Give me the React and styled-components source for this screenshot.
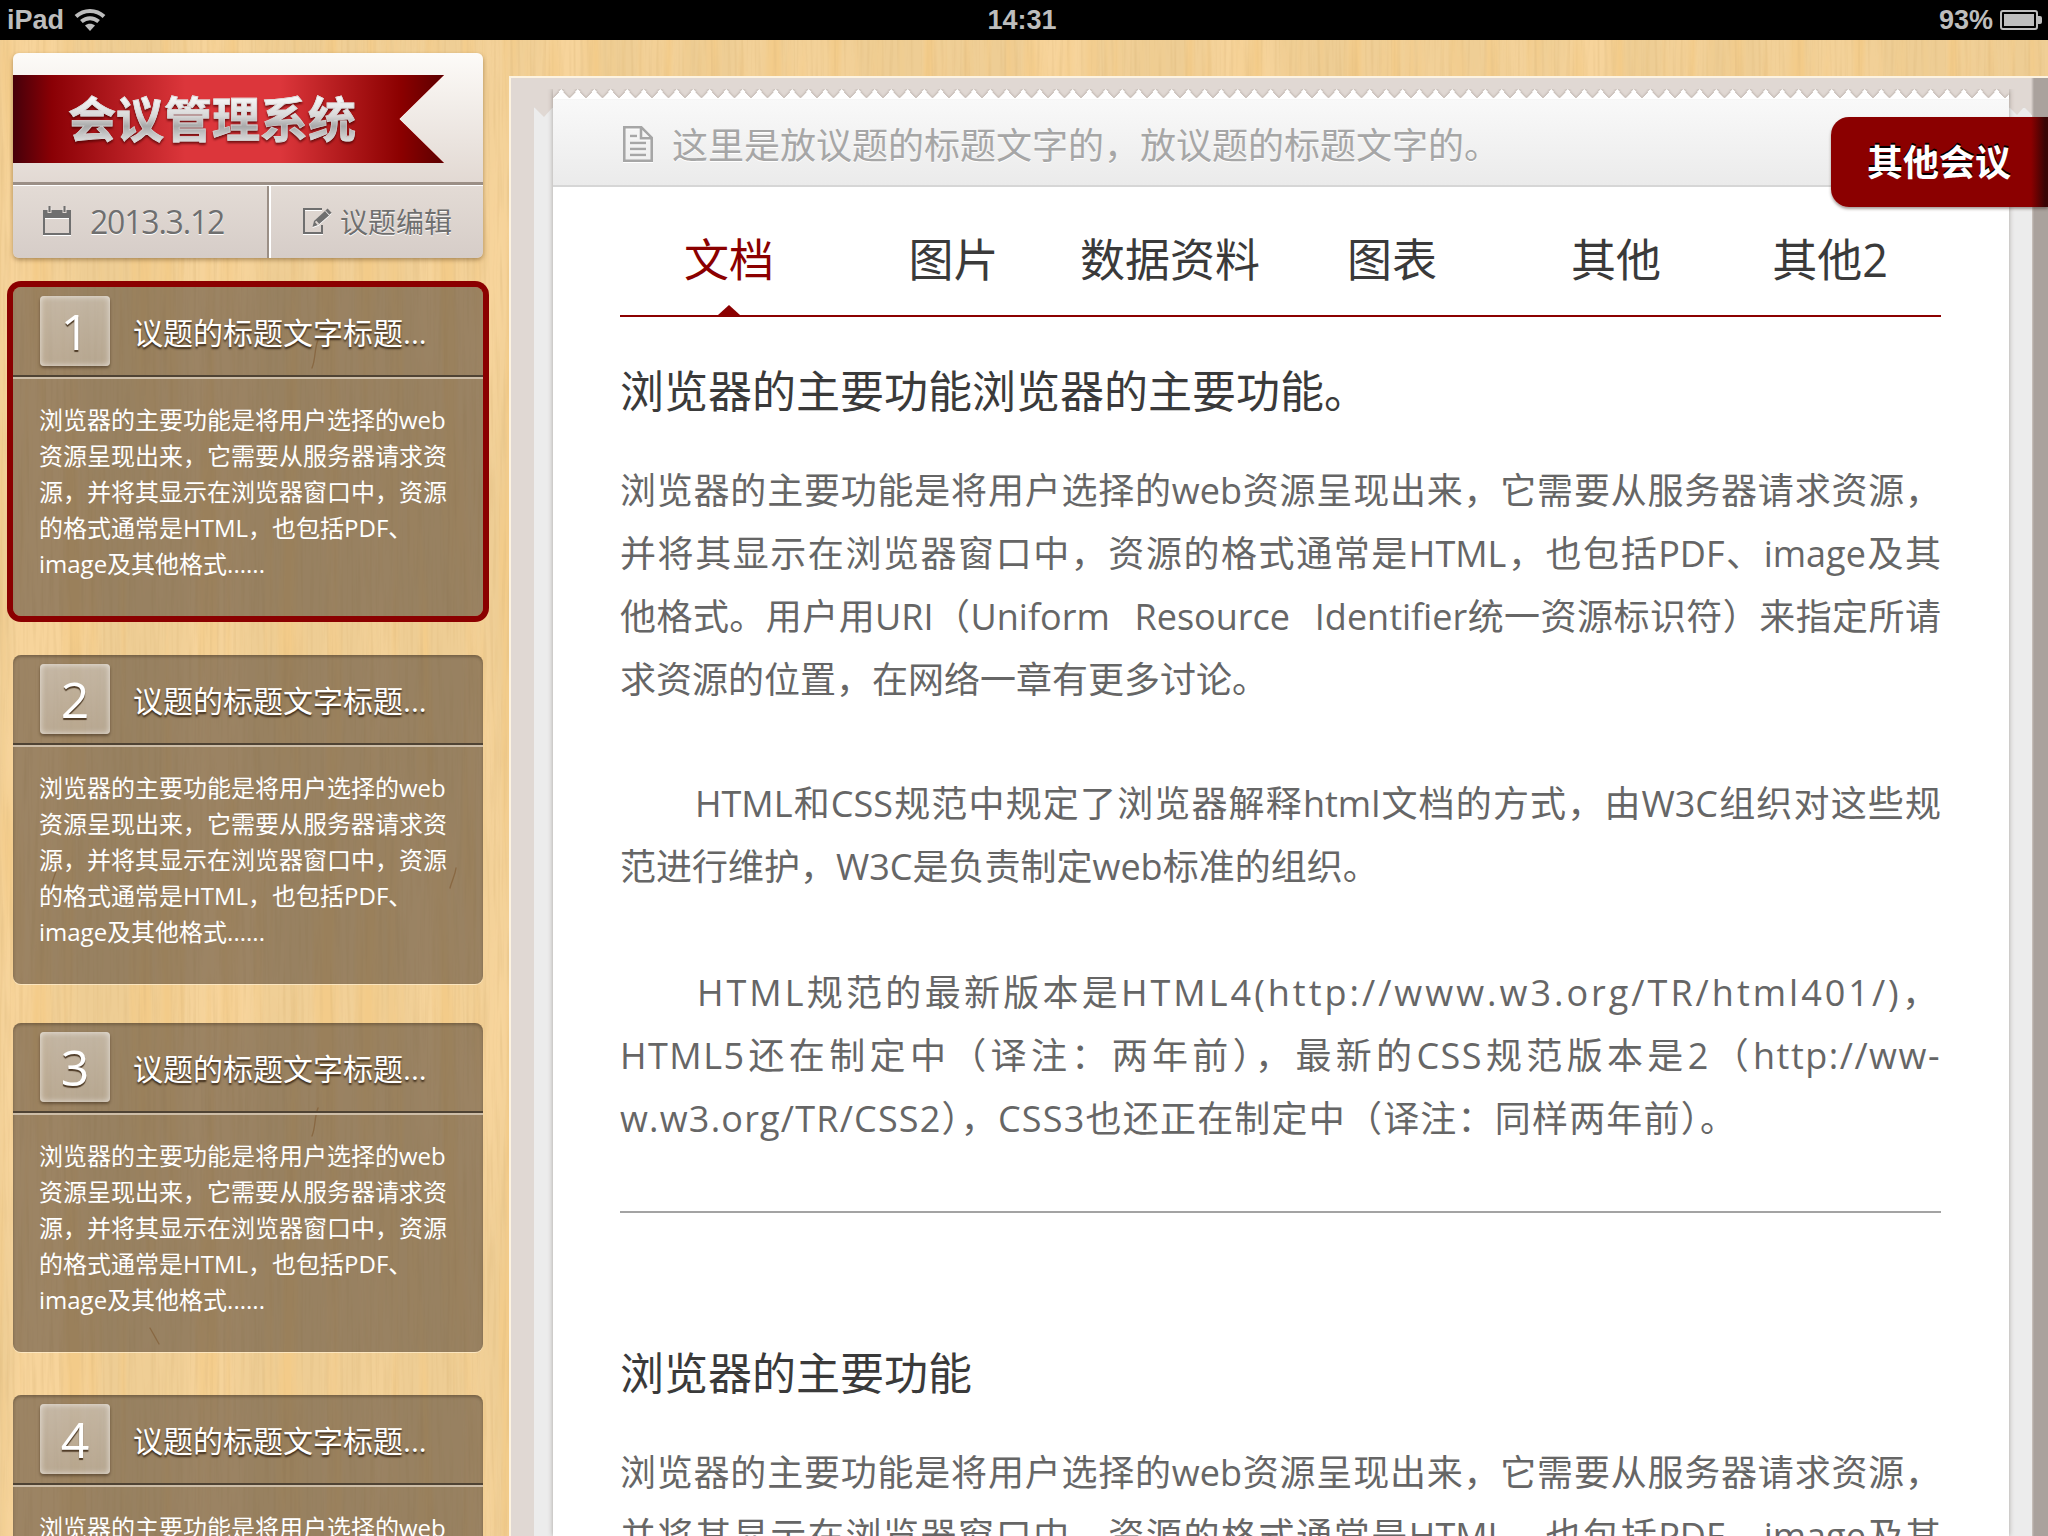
import React from 'react'
import styled, { createGlobalStyle } from 'styled-components'

const woodSvg = `<svg xmlns='http://www.w3.org/2000/svg' width='1024' height='768'>
<filter id='b' x='0' y='0' width='100%' height='100%'><feTurbulence type='fractalNoise' baseFrequency='0.012 0.0012' numOctaves='3' seed='11' stitchTiles='stitch'/><feColorMatrix values='0 0 0 0 0.93  0 0 0 0 0.66  0 0 0 0 0.33  3.6 0 0 0 -1.5'/></filter>
<filter id='g' x='0' y='0' width='100%' height='100%'><feTurbulence type='fractalNoise' baseFrequency='0.05 0.002' numOctaves='3' seed='7' stitchTiles='stitch'/><feColorMatrix values='0 0 0 0 0.9  0 0 0 0 0.6  0 0 0 0 0.25  3.6 0 0 0 -1.7'/></filter>
<filter id='f' x='0' y='0' width='100%' height='100%'><feTurbulence type='fractalNoise' baseFrequency='0.3 0.012' numOctaves='2' seed='3' stitchTiles='stitch'/><feColorMatrix values='0 0 0 0 0.72  0 0 0 0 0.48  0 0 0 0 0.2  1 0 0 0 -0.46'/></filter>
<rect width='1024' height='768' fill='#eecd94'/><rect width='1024' height='768' filter='url(#b)'/><rect width='1024' height='768' filter='url(#g)'/><rect width='1024' height='768' filter='url(#f)'/>
<g fill='none' stroke='#b9782c' stroke-width='1.4' stroke-linecap='round' opacity='0.6'>
<path d='M57 60c-2 8-5 12-6 20'/><path d='M456 60c-1 8-4 12-6 20'/><path d='M616 40l7 18'/><path d='M765 60c0 6-1 8-2 14'/><path d='M318 300c-4 10-2 18-6 28'/><path d='M840 420c-3 8-6 14-5 24'/><path d='M150 520l9 16'/><path d='M560 620c-2 8-4 12-5 22'/>
</g></svg>`
const wood = `url("data:image/svg+xml,${encodeURIComponent(woodSvg)}")`

const Global = createGlobalStyle`
  html, body { margin: 0; padding: 0; background: #000; }
  body { width: 2048px; height: 1536px; overflow: hidden; font-family: "Open Sans", "Noto Sans CJK SC", sans-serif; }
`

const Screen = styled.div`
  width: 2048px;
  height: 1536px;
  display: flex;
  flex-direction: column;
  overflow: hidden;
`

const StatusBar = styled.div`
  height: 40px;
  flex-shrink: 0;
  background: #000;
  color: #bdbdbd;
  display: grid;
  grid-template-columns: 1fr auto 1fr;
  align-items: center;
  padding: 0 6px 0 7px;
  font-family: "Liberation Sans", sans-serif;
  font-size: 27px;
  font-weight: 700;
`
const StatusLeft = styled.div`
  display: flex;
  align-items: center;
  gap: 10px;
`
const StatusTime = styled.div`
  margin-right: 5px;
`
const StatusRight = styled.div`
  display: flex;
  align-items: center;
  justify-content: flex-end;
  gap: 7px;
`
const Desk = styled.div`
  flex: 1;
  display: flex;
  background: ${wood};
  min-height: 0;
`

const Sidebar = styled.aside`
  width: 509px;
  flex-shrink: 0;
  padding: 13px 26px 0 13px;
  box-sizing: border-box;
`
const BrandCard = styled.div`
  border-radius: 6px;
  overflow: hidden;
  box-shadow: 0 2px 4px rgba(90, 60, 20, 0.45);
`
const BrandTop = styled.div`
  height: 132px;
  padding-top: 22px;
  box-sizing: border-box;
  background: linear-gradient(#fdfbf8, #e2d9d3);
  border-bottom: 3px solid #9b8f86;
`
const Ribbon = styled.div`
  width: 431px;
  height: 88px;
  display: flex;
  align-items: center;
  padding-left: 55px;
  box-sizing: border-box;
  clip-path: polygon(0 0, 100% 0, 89.6% 50%, 100% 100%, 0 100%);
  background:
    linear-gradient(90deg, #45000a 0, #8a0005 9%, rgba(139, 0, 0, 0) 40%, rgba(139, 0, 0, 0) 62%, #8b0000 90%, #5c0000 100%),
    #dc363b;
`
const RibbonTitle = styled.h1`
  margin: 0;
  font-size: 48px;
  line-height: 60px;
  font-weight: 700;
  color: transparent;
  background: linear-gradient(#f6f6f6 15%, #d8d8d8 45%, #a8a8a8 62%, #e0e0e0 88%);
  -webkit-background-clip: text;
  background-clip: text;
  -webkit-text-stroke: 0.8px rgba(215, 215, 215, 0.75);
  filter: drop-shadow(0 2px 1px rgba(70, 0, 0, 0.7));
`
const BrandRow = styled.div`
  height: 73px;
  box-sizing: border-box;
  display: flex;
  color: #6f6f6f;
  background: linear-gradient(#e3dbd5, #d6cdc8);
  border-top: 1px solid #fff;
  text-shadow: 0 1px 0 #fff;
`
const DateCell = styled.div`
  width: 256px;
  display: flex;
  align-items: center;
  gap: 19px;
  padding: 0 0 2px 30px;
  box-sizing: border-box;
  font-size: 32px;
  letter-spacing: -1.2px;
  border-right: 2px solid #9b8f86;
`
const EditCell = styled.div`
  flex: 1;
  display: flex;
  align-items: center;
  gap: 8px;
  padding: 0 0 2px 32px;
  font-size: 28px;
  border-left: 2px solid #fff;
`

const AgendaList = styled.div`
  display: flex;
  flex-direction: column;
  margin-top: 29px;
`
const Agenda = styled.section`
  height: 329px;
  flex-shrink: 0;
  margin-bottom: ${p => p.$gap}px;
  border-radius: 8px;
  background: rgba(72, 60, 50, 0.52);
  color: #fff;
  box-shadow: ${p => p.$active
    ? '0 0 0 6px #8b0000'
    : 'inset 0 2px 3px rgba(40, 25, 10, 0.3), 0 1px 0 rgba(255, 240, 210, 0.7)'};
`
const AgendaHead = styled.div`
  height: 88px;
  display: flex;
  align-items: center;
  gap: 23px;
  padding-left: 27px;
  border-bottom: 2px solid #4f4334;
  box-shadow: 0 2px 0 #cdbda7;
`
const Badge = styled.div`
  width: 70px;
  height: 70px;
  flex-shrink: 0;
  display: flex;
  align-items: center;
  justify-content: center;
  border-radius: 4px;
  font-size: 50px;
  font-family: "Open Sans", sans-serif;
  font-weight: 400;
  background: linear-gradient(rgba(255, 255, 255, 0.42), rgba(255, 255, 255, 0.3));
  box-shadow: inset 0 0 6px rgba(255, 255, 255, 0.7), 0 2px 3px rgba(40, 25, 10, 0.45);
  text-shadow: 0 2px 1px rgba(50, 30, 10, 0.8);
`
const AgendaTitle = styled.div`
  font-size: 30px;
  line-height: 40px;
  padding-top: 4px;
  text-shadow: 0 2px 2px rgba(40, 25, 10, 0.85);
`
const AgendaText = styled.p`
  margin: 0;
  padding: 25px 0 0 26px;
  font-size: 24px;
  line-height: 36px;
  color: #fff;
  white-space: nowrap;
`

const Main = styled.main`
  position: relative;
  flex: 1;
  margin-top: 36px;
  padding: 11px 39px 0 42px;
  display: flex;
  background: linear-gradient(90deg, #e0d8d3 1520px, #aaa29d 1523px);
  border-top: 2px solid #fdf3e0;
  border-left: 2px solid #fdf3e0;
  box-sizing: border-box;
  min-width: 0;
  &::before {
    content: '';
    position: absolute;
    top: 29px;
    left: 23px;
    right: 16px;
    bottom: 0;
    background: #ececec;
    box-shadow: 0 0 4px rgba(60, 50, 40, 0.35);
    clip-path: polygon(0 0, 10px 10px, 19px 0, 19px 100%, 1475px 100%, 1475px 0, 1483px 8px, 1490px 0, 1498px 8px, 1498px 100%, 0 100%);
  }
`
const Page = styled.div`
  position: relative;
  width: 1456px;
  flex-shrink: 0;
  box-shadow: 0 0 5px rgba(60, 50, 40, 0.4);
  clip-path: inset(0 -8px 0 -8px);
`
const Teeth = styled.div`
  height: 10px;
  background: conic-gradient(from 140.5deg at 50% 0, #fff 79deg, transparent 0) 0 0 / 16.5px 10px repeat-x;
  filter: drop-shadow(0 -1px 1px rgba(70, 50, 40, 0.25));
`
const Sheet = styled.div`
  background: #fff;
  height: 1437px;
`
const PageHeader = styled.header`
  height: 88px;
  display: flex;
  align-items: center;
  gap: 19px;
  padding: 3px 0 0 70px;
  background: linear-gradient(#f9f9f9, #ebebeb);
  border-bottom: 2px solid #d6d6d6;
  box-sizing: border-box;
  color: #a6a6a6;
  font-size: 36px;
  text-shadow: 0 1px 0 #fff;
`
const Content = styled.div`
  padding: 0 68px 0 67px;
`
const TabBar = styled.nav`
  display: grid;
  grid-template-columns: 218px 231px 202px 242px 206px 1fr;
  padding: 45px 0 27px;
  border-bottom: 2px solid #8b0000;
`
const Tab = styled.div`
  position: relative;
  text-align: center;
  font-size: 45px;
  line-height: 56px;
  color: ${p => (p.$active ? '#8b0000' : '#3a3a3a')};
  ${p => p.$active && `
    &::after {
      content: '';
      position: absolute;
      left: 50%;
      bottom: -27px;
      margin-left: -11px;
      border: solid transparent;
      border-width: 0 11px 10px;
      border-bottom-color: #8b0000;
    }
  `}
`
const Heading = styled.h2`
  margin: ${p => p.$top}px 0 38px;
  font-size: 44px;
  line-height: 60px;
  font-weight: 400;
  color: #3a3a3a;
`
const Para = styled.p`
  margin: ${p => p.$top || 0}px 0 0;
  font-size: 36px;
  line-height: 63px;
  color: #666;
`
const Line = styled.span`
  display: block;
  text-align: ${p => (p.$last ? 'left' : 'justify')};
  text-align-last: ${p => (p.$last ? 'left' : 'justify')};
  text-indent: ${p => p.$indent || 0}px;
  letter-spacing: ${p => p.$spacing || 0}px;
  word-spacing: ${p => p.$words || 0}px;
`
const Rule = styled.hr`
  margin: 61px 0 0;
  border: 0;
  border-top: 2px solid #a3a3a3;
`
const OtherButton = styled.button`
  position: absolute;
  top: 39px;
  right: 0;
  width: 217px;
  height: 90px;
  padding: 0 0 3px 36px;
  border: 0;
  border-radius: 18px 0 0 18px;
  text-align: left;
  font-family: inherit;
  font-size: 36px;
  font-weight: 700;
  color: #fff;
  text-shadow: 0 -2px 0 #000;
  background: linear-gradient(90deg, #8b0000 200px, #380404 214px);
  box-shadow: 0 2px 3px rgba(60, 40, 30, 0.45);
`

const WifiIcon = () => (
  <svg width="32" height="24" viewBox="0 0 32 24" fill="none" stroke="#bdbdbd" strokeWidth="4">
    <path d="M2 8.500C10 1 22 1 30 8.500" />
    <path d="M7.400 13.600C12.600 9 19.400 9 24.600 13.600" />
    <path d="M16 23l-5-5.400c2.900-2.400 7.100-2.400 10 0z" fill="#bdbdbd" stroke="none" />
  </svg>
)
const BatteryIcon = () => (
  <svg width="42" height="21" viewBox="0 0 42 21">
    <rect x="1" y="1" width="36" height="18" rx="2" fill="none" stroke="#bdbdbd" strokeWidth="2" />
    <rect x="4" y="4" width="30" height="12" fill="#bdbdbd" />
    <path d="M38 6h2a2 2 0 0 1 2 2v4a2 2 0 0 1-2 2h-2z" fill="#bdbdbd" />
  </svg>
)
const CalendarIcon = () => (
  <svg width="28" height="30" viewBox="0 0 28 30" fill="none" stroke="#6f6f6f" style={{ filter: 'drop-shadow(0 1px 0 #fff)' }}>
    <path d="M1 5h26v23H1zM1 11h26" strokeWidth="2" />
    <path d="M1 5h26v5H1z" fill="#6f6f6f" strokeWidth="0" />
    <path d="M6.500 1v6M21.500 1v6" stroke="#e0d8d3" strokeWidth="4" />
    <path d="M6.500 0v6M21.500 0v6" strokeWidth="2" />
  </svg>
)
const EditIcon = () => (
  <svg width="29" height="26" viewBox="0 0 29 26" fill="none" stroke="#6f6f6f" strokeWidth="2" style={{ filter: 'drop-shadow(0 1px 0 #fff)' }}>
    <path d="M19 1H1v24h18v-8" />
    <path d="M9.500 19l1.500-6L22 3l4 4.400L15 17z" fill="#6f6f6f" stroke="none" />
    <path d="M23.500 1.500l4 4.300" strokeWidth="3" />
    <path d="M12.600 13.400l3 3.200" stroke="#e0d8d3" />
  </svg>
)
const DocIcon = () => (
  <svg width="30" height="36" viewBox="0 0 30 36" fill="none" stroke="#a6a6a6" strokeWidth="2.600" style={{ filter: 'drop-shadow(0 1px 0 #fff)' }}>
    <path d="M1.300 1.300h17l10.400 10.400v23H1.300z" />
    <path d="M18 1.300v11h10.700" />
    <path d="M7 10h7M7 17h16M7 23h16M7 29h16" />
  </svg>
)

const agendaBody = (
  <>
    浏览器的主要功能是将用户选择的web<br />
    资源呈现出来，它需要从服务器请求资<br />
    源，并将其显示在浏览器窗口中，资源<br />
    的格式通常是HTML，也包括PDF、<br />
    image及其他格式......
  </>
)

const agendas = [
  { no: 1, active: true, gap: 39 },
  { no: 2, gap: 39 },
  { no: 3, gap: 43 },
  { no: 4, gap: 0 },
]
const tabs = ['文档', '图片', '数据资料', '图表', '其他', '其他2']

const App = () => (
  <Screen>
    <Global />
    <StatusBar>
      <StatusLeft>iPad<WifiIcon /></StatusLeft>
      <StatusTime>14:31</StatusTime>
      <StatusRight>93%<BatteryIcon /></StatusRight>
    </StatusBar>
    <Desk>
      <Sidebar>
        <BrandCard>
          <BrandTop>
            <Ribbon><RibbonTitle>会议管理系统</RibbonTitle></Ribbon>
          </BrandTop>
          <BrandRow>
            <DateCell><CalendarIcon />2013.3.12</DateCell>
            <EditCell><EditIcon />议题编辑</EditCell>
          </BrandRow>
        </BrandCard>
        <AgendaList>
          {agendas.map(a => (
            <Agenda key={a.no} $active={a.active} $gap={a.gap}>
              <AgendaHead>
                <Badge>{a.no}</Badge>
                <AgendaTitle>议题的标题文字标题...</AgendaTitle>
              </AgendaHead>
              <AgendaText>{agendaBody}</AgendaText>
            </Agenda>
          ))}
        </AgendaList>
      </Sidebar>
      <Main>
        <Page>
          <Teeth />
          <Sheet>
            <PageHeader><DocIcon />这里是放议题的标题文字的，放议题的标题文字的。</PageHeader>
            <Content>
              <TabBar>
                {tabs.map((t, i) => <Tab key={t} $active={i === 0}>{t}</Tab>)}
              </TabBar>
              <Heading $top={44}>浏览器的主要功能浏览器的主要功能。</Heading>
              <Para>
                <Line>浏览器的主要功能是将用户选择的web资源呈现出来，它需要从服务器请求资源，</Line>
                <Line>并将其显示在浏览器窗口中，资源的格式通常是HTML，也包括PDF、image及其</Line>
                <Line $words={15}>他格式。用户用URI（Uniform Resource Identifier统一资源标识符）来指定所请</Line>
                <Line $last>求资源的位置，在网络一章有更多讨论。</Line>
              </Para>
              <Para $top={61}>
                <Line $indent={75}>HTML和CSS规范中规定了浏览器解释html文档的方式，由W3C组织对这些规</Line>
                <Line $last>范进行维护，W3C是负责制定web标准的组织。</Line>
              </Para>
              <Para $top={63}>
                <Line $indent={77} $spacing={3}>HTML规范的最新版本是HTML4(http://www.w3.org/TR/html401/)，</Line>
                <Line $spacing={1.5}>HTML5还在制定中（译注：两年前），最新的CSS规范版本是2（http://ww-</Line>
                <Line $last $spacing={1.2}>w.w3.org/TR/CSS2），CSS3也还正在制定中（译注：同样两年前）。</Line>
              </Para>
              <Rule />
              <Heading $top={130}>浏览器的主要功能</Heading>
              <Para>
                <Line>浏览器的主要功能是将用户选择的web资源呈现出来，它需要从服务器请求资源，</Line>
                <Line>并将其显示在浏览器窗口中，资源的格式通常是HTML，也包括PDF、image及其</Line>
              </Para>
            </Content>
          </Sheet>
        </Page>
        <OtherButton>其他会议</OtherButton>
      </Main>
    </Desk>
  </Screen>
)

export default App
